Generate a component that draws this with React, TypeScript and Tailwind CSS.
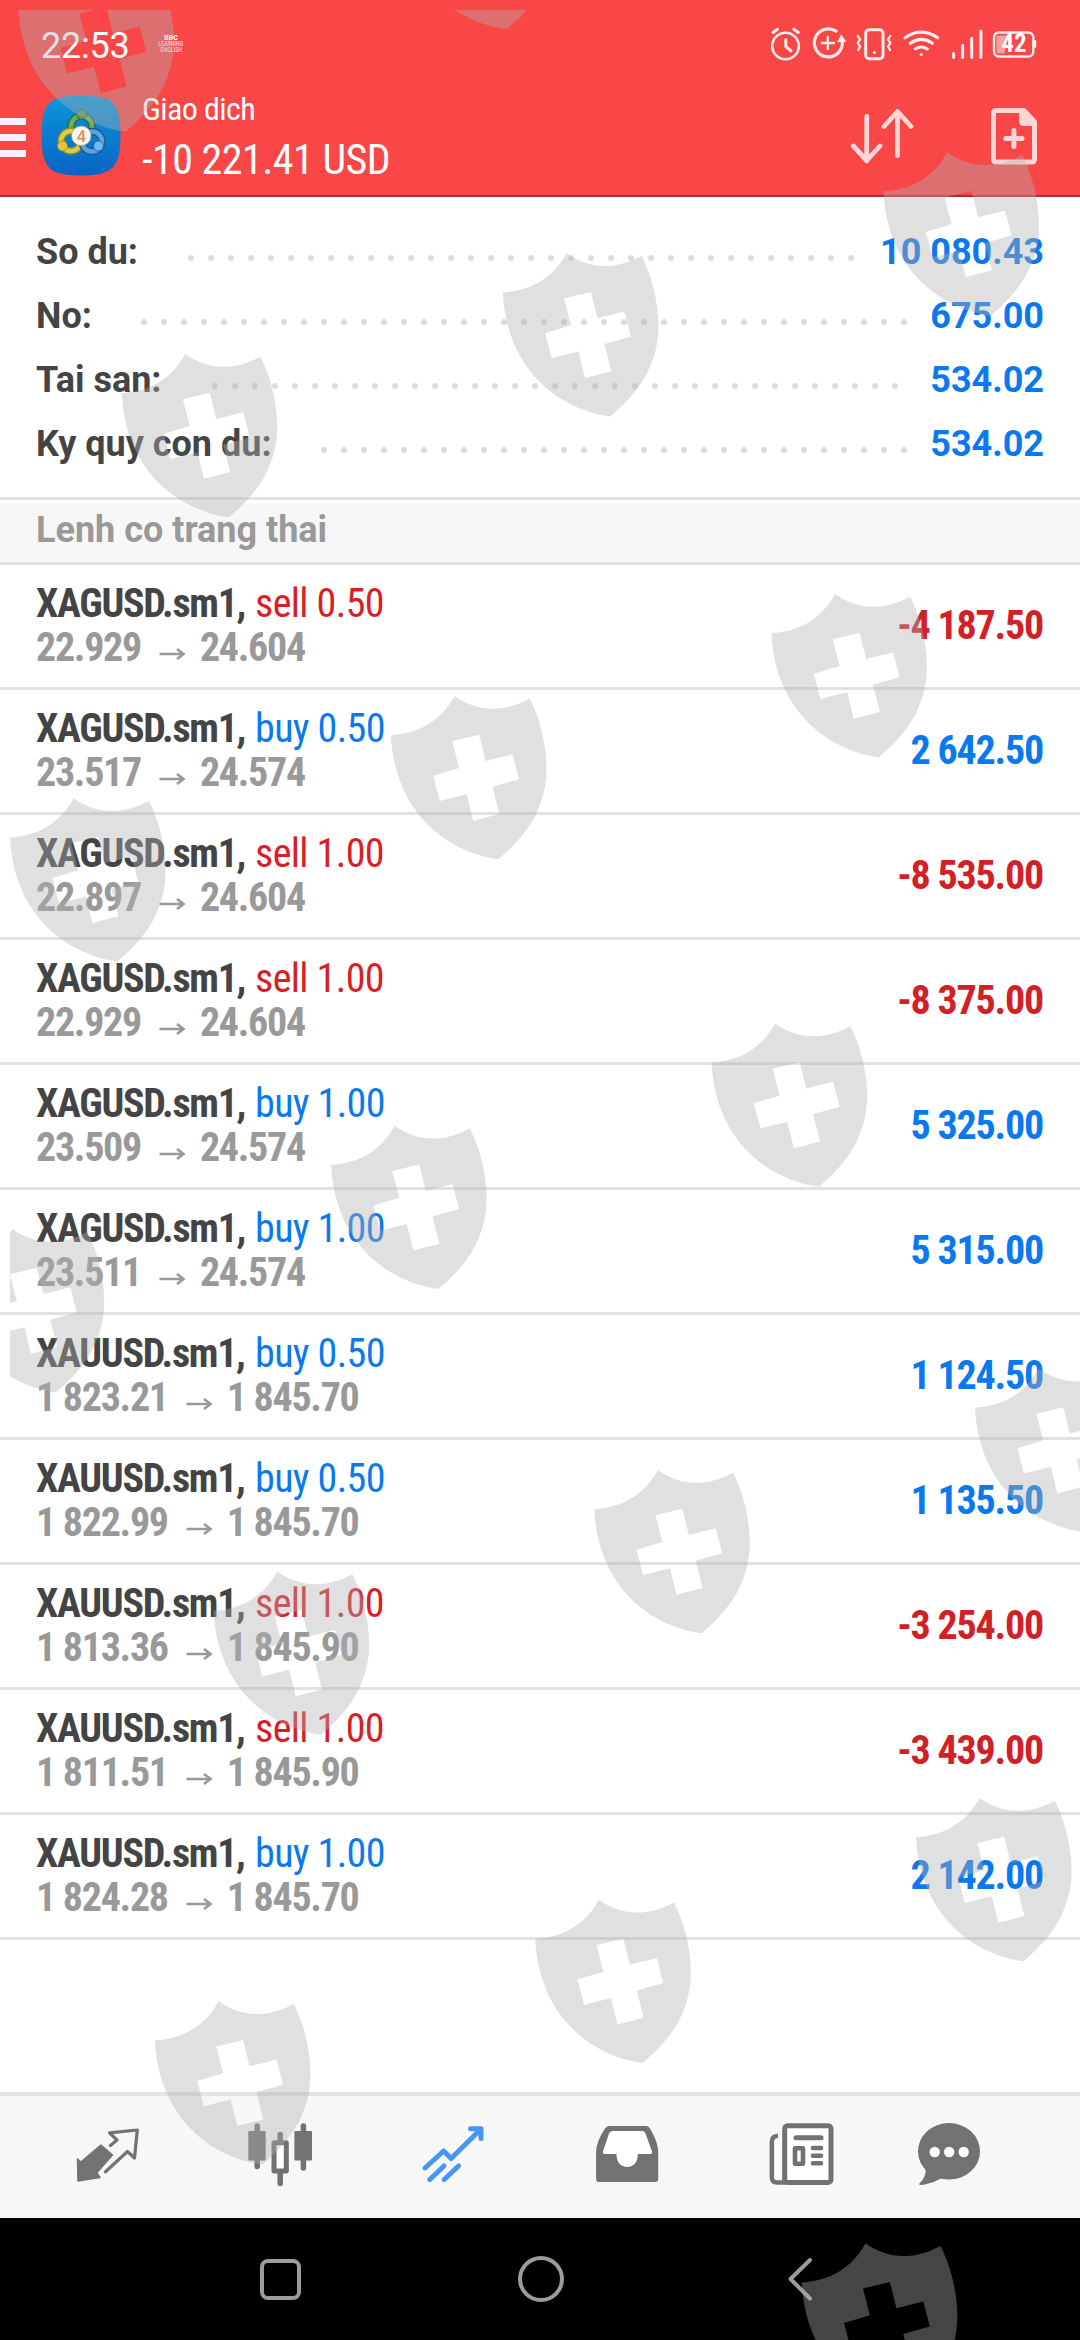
import type { ReactNode } from "react";
import clsx from "clsx";

interface Position {
  symbol: string;
  side: "buy" | "sell";
  volume: string;
  open: string;
  current: string;
  profit: string;
}

const summary = [
  { label: "So du:", value: "10 080.43", width: "w-[145px]", dots: 34 },
  { label: "No:", value: "675.00", width: "w-[98px]", dots: 39 },
  { label: "Tai san:", value: "534.02", width: "w-[169px]", dots: 35 },
  { label: "Ky quy con du:", value: "534.02", width: "w-[278px]", dots: 30 },
];

const positions: Position[] = [
  { symbol: "XAGUSD.sm1", side: "sell", volume: "0.50", open: "22.929", current: "24.604", profit: "-4 187.50" },
  { symbol: "XAGUSD.sm1", side: "buy", volume: "0.50", open: "23.517", current: "24.574", profit: "2 642.50" },
  { symbol: "XAGUSD.sm1", side: "sell", volume: "1.00", open: "22.897", current: "24.604", profit: "-8 535.00" },
  { symbol: "XAGUSD.sm1", side: "sell", volume: "1.00", open: "22.929", current: "24.604", profit: "-8 375.00" },
  { symbol: "XAGUSD.sm1", side: "buy", volume: "1.00", open: "23.509", current: "24.574", profit: "5 325.00" },
  { symbol: "XAGUSD.sm1", side: "buy", volume: "1.00", open: "23.511", current: "24.574", profit: "5 315.00" },
  { symbol: "XAUUSD.sm1", side: "buy", volume: "0.50", open: "1 823.21", current: "1 845.70", profit: "1 124.50" },
  { symbol: "XAUUSD.sm1", side: "buy", volume: "0.50", open: "1 822.99", current: "1 845.70", profit: "1 135.50" },
  { symbol: "XAUUSD.sm1", side: "sell", volume: "1.00", open: "1 813.36", current: "1 845.90", profit: "-3 254.00" },
  { symbol: "XAUUSD.sm1", side: "sell", volume: "1.00", open: "1 811.51", current: "1 845.90", profit: "-3 439.00" },
  { symbol: "XAUUSD.sm1", side: "buy", volume: "1.00", open: "1 824.28", current: "1 845.70", profit: "2 142.00" },
];

const shields = [
  [18.2, -31.6], [398.9, -134],
  [883.4, 152.3], [502.8, 253.3], [121.6, 354],
  [771.4, 594], [390.9, 696], [10, 798.3],
  [711.5, 1023.5], [331, 1125.7], [-51.4, 1229],
  [975, 1368.5], [594.2, 1470], [213.5, 1571.5],
  [916, 1798], [535.2, 1899.7], [154.9, 2001.3],
  [801.7, 2243.3],
];

const StatusIcons = () => (
  <svg className="h-9 w-[272px]" viewBox="768 26 272 36" fill="none" stroke="#ffecec" strokeWidth="3" strokeLinecap="round">
    {/* alarm */}
    <circle cx="785.5" cy="46" r="13.3" strokeWidth="2.6" />
    <path d="M773 32.5L777.5 29.3M798.3 32.5L793.8 29.3M785.8 39.5V46.5L791 50.8" />
    {/* data saver */}
    <path d="M836 31.2A14 14 0 1 0 842.3 42" strokeWidth="3.2" />
    <path d="M827.8 37V49M821.8 43H834" strokeWidth="2.4" />
    <path d="M841.2 36L845 41L838.5 41.500Z" fill="#ffecec" strokeWidth="1.500" />
    {/* vibrate */}
    <rect x="865.7" y="29.7" width="17.3" height="29" rx="3.5" />
    <path d="M857.8 36L860 39.5L857.8 43L860 46.5L858.2 50M890.3 36L888.1 39.5L890.3 43L888.1 46.5L890 50" strokeWidth="2.3" />
    <circle cx="874.3" cy="52.5" r="1.6" fill="#ffecec" stroke="none" />
    {/* wifi */}
    <path d="M905 37.8Q921.3 26.5 937.6 37.8M910.3 43.3Q921.3 35.5 932.3 43.3M915.3 48.9Q921.3 45 927.3 48.9" />
    <circle cx="921.3" cy="54.6" r="1.6" fill="#ffecec" stroke="none" />
    {/* signal */}
    <path d="M953.6 53.5V57.5M962.6 45.5V57.5M971.7 38.3V57.5M980.9 31V57.5" />
    {/* battery */}
    <path d="M996.5 35.5H1008L1004.5 53.5H996.5Z" fill="#fda0a0" stroke="none" />
    <rect x="994" y="32.5" width="39.3" height="24" rx="5" strokeWidth="2.4" />
    <path d="M1034.5 41.5V46.5" strokeWidth="3.4" />
    <text
      x="1001.5"
      y="52.3"
      fill="#ffffff"
      stroke="none"
      textLength="25"
      lengthAdjust="spacingAndGlyphs"
      className="[font-family:'Roboto_Condensed',Roboto,sans-serif] text-[25px] font-bold"
    >
      42
    </text>
  </svg>
);

const AppLogo = () => (
  <svg className="h-[81px] w-20" viewBox="0 0 80 81">
    <defs>
      <linearGradient id="tile" x1="0" y1="0" x2="0" y2="1">
        <stop offset="0" stopColor="#0b96dc" />
        <stop offset="1" stopColor="#0a63c4" />
      </linearGradient>
    </defs>
    <path d="M0.5 40C0.5 8 8 0.5 40 0.5S79.5 8 79.5 40S72 80.5 40 80.5S0.5 73 0.5 40Z" fill="url(#tile)" />
    <g fill="none">
      <circle cx="40.500" cy="31.500" r="10.500" stroke="#2c6f3a" strokeWidth="7.500" />
      <circle cx="40.500" cy="31.500" r="10.500" stroke="#6aae62" strokeWidth="4.500" />
      <circle cx="30" cy="46" r="10" stroke="#8f8a2a" strokeWidth="7.500" />
      <circle cx="30" cy="46" r="10" stroke="#d8cf45" strokeWidth="4.500" />
      <circle cx="51" cy="46.500" r="10" stroke="#1d5c94" strokeWidth="7.500" />
      <circle cx="51" cy="46.500" r="10" stroke="#58a5dc" strokeWidth="4.500" />
    </g>
    <circle cx="40.500" cy="19.500" r="5" fill="#4c9a5a" stroke="#2c6f3a" strokeWidth="0.8" />
    <circle cx="21.500" cy="51" r="5" fill="#e2c637" stroke="#8f8a2a" strokeWidth="0.8" />
    <circle cx="57.500" cy="51" r="5" fill="#6cbcf4" stroke="#1d5c94" strokeWidth="0.8" />
    <circle cx="40.300" cy="40.800" r="9.800" fill="#f8f7ef" stroke="#9da083" strokeWidth="0.8" />
    <text x="40.300" y="46.800" textAnchor="middle" fill="#e8914a" className="[font-family:Roboto,sans-serif] text-[17px] font-medium">
      4
    </text>
  </svg>
);

const Header = () => (
  <header className="h-[197px] border-b-2 border-[#a8302f] bg-[#f94646] text-white">
    <div className="flex h-[88px] items-center pr-10 pl-[41px]">
      <span className="w-[116px] pt-1 text-[36px] leading-[84px] tracking-[-0.2px]">22:53</span>
      <div className="flex w-7 flex-col items-center text-[7px] leading-[6px] font-medium text-[#ffdada]">
        <span className="font-black text-white">BBC</span>
        <span className="scale-x-75">LEARNING</span>
        <span className="scale-x-75">ENGLISH</span>
      </div>
      <div className="ml-auto">
        <StatusIcons />
      </div>
    </div>
    <div className="flex h-[107px] [font-family:'Roboto_Condensed',Roboto,sans-serif]">
      <div className="mt-[30px] mr-[15px] flex w-[26px] flex-col gap-[9px]">
        <span className="h-[7px] bg-[#fdeeff]" />
        <span className="h-[7px] bg-[#fdeeff]" />
        <span className="h-[7px] bg-[#fdeeff]" />
      </div>
      <div className="mt-[7px]">
        <AppLogo />
      </div>
      <div className="ml-[21px] flex flex-col whitespace-nowrap">
        <span className="mt-px text-[32px] leading-10 tracking-[-0.6px]">Giao dich</span>
        <span className="mt-1 text-[42px] leading-[54px] tracking-[-0.5px]">-10 221.41 USD</span>
      </div>
      <svg className="mt-5 ml-auto h-[60px] w-16" viewBox="850 108 64 60" fill="none" stroke="#ffd6d6" strokeWidth="4.800" strokeLinecap="round" strokeLinejoin="round">
        <path d="M866.700 116.500V161M853.300 146L866.700 160.500L880 146" />
        <path d="M897.500 155.500V112M884 126.500L897.500 111.500L911 126.500" />
      </svg>
      <svg className="mt-5 mr-10 ml-[74px] h-[60px] w-[52px]" viewBox="988 108 52 60" fill="none" stroke="#ffd6d6" strokeWidth="5" strokeLinecap="round" strokeLinejoin="round">
        <path d="M993.500 113.500V159Q993.500 162 996.500 162H1031.500Q1034.500 162 1034.500 159V122L1024 110.500H996.500Q993.500 110.500 993.500 113.500Z" />
        <path d="M1021.500 112V121Q1021.500 123.500 1024 123.500H1033Z" fill="#ffd6d6" />
        <path d="M1013.900 130.500V146.500M1005.800 138.500H1022" />
      </svg>
    </div>
  </header>
);

const Summary = () => (
  <section className="border-b-3 border-[#e2e2e2] pt-[23px] pr-9 pb-[21px] pl-9 text-[36px] font-bold">
    {summary.map((row) => (
      <div key={row.label} className="flex h-16 items-center leading-[64px]">
        <span className={clsx("shrink-0 whitespace-nowrap text-[#444]", row.width)}>{row.label}</span>
        <span className="mt-3 flex">
          {Array.from({ length: row.dots }, (_, i) => (
            <span key={i} className="mx-[7px] size-1.5 rounded-full bg-[#dcdcdc]" />
          ))}
        </span>
        <span className="ml-auto text-[#0b79ee]">{row.value}</span>
      </div>
    ))}
  </section>
);

const PositionRow = ({ position }: { position: Position }) => (
  <li className="flex h-[125px] items-center justify-between border-b-3 border-[#e2e2e2] pr-[37px] pl-9 text-[40px] leading-[44px]">
    <div className="flex flex-col whitespace-nowrap">
      <div className="flex">
        <span className="w-[219px] font-bold tracking-[-1.3px] text-[#444]">{position.symbol},</span>
        <span className={clsx("tracking-[-0.6px]", position.side === "buy" ? "text-[#0b79ee]" : "text-[#d81f26]")}>
          {position.side} {position.volume}
        </span>
      </div>
      <div className="flex font-bold tracking-[-1.3px] text-[#999]">
        <span>{position.open}</span>
        <svg className="mt-[22px] mr-[14px] ml-[17px] h-3 w-7" viewBox="0 0 28 12" fill="none" stroke="#999" strokeWidth="2.600">
          <path d="M1.500 6H25M19 1L25.500 6L19 11" />
        </svg>
        <span>{position.current}</span>
      </div>
    </div>
    <span className={clsx("font-bold tracking-[-1.2px]", position.profit.startsWith("-") ? "text-[#d22027]" : "text-[#0b79ee]")}>
      {position.profit}
    </span>
  </li>
);

const TabIcon = ({ children }: { children: ReactNode }) => (
  <svg className="h-[70px] w-[72px]" viewBox="0 0 72 70" fill="none" stroke="#727272" strokeLinejoin="round" strokeLinecap="round">
    {children}
  </svg>
);

const TabBar = () => (
  <nav className="flex h-[126px] border-t-4 border-[#e4e4e4] bg-[#f7f7f7] pt-6 pl-[70px]">
    <TabIcon>
      <path d="M7.500 39L10.900 42L30.900 25L42.500 35L26.800 52.700L30 57.500L8 61Z" fill="#727272" strokeWidth="1.500" />
      <path d="M35.500 51.800L57.500 31.500L64.500 38L67.300 10L39.500 12.800L47 20L40.500 25.500" strokeWidth="3.200" />
    </TabIcon>
    <span className="w-[102px]" />
    <TabIcon>
      <path d="M13.200 6V46.500M59.400 6V48M36.200 14.500V63.500" strokeWidth="5.500" />
      <rect x="5.300" y="12" width="15.400" height="27.500" fill="#727272" strokeWidth="2" />
      <rect x="51.400" y="12" width="15.600" height="27.500" fill="#727272" strokeWidth="2" />
      <rect x="30" y="22.800" width="12.300" height="28.200" fill="#fff" strokeWidth="5" />
    </TabIcon>
    <span className="w-[102px]" />
    <TabIcon>
      <g stroke="#4697f4" strokeWidth="5">
        <path d="M7 48L25.600 31L33.100 38.500L62.500 9.500M11.800 59.500L26 46M26.200 59.500L40.500 46" />
        <path d="M52.500 8.800H63V18.500" />
      </g>
    </TabIcon>
    <span className="w-[100px]" />
    <TabIcon>
      <path
        d="M19 6H56.500Q58.500 6 60 8.500Q68.200 22 68.200 32V59Q68.200 62 65.200 62H9Q6.100 62 6.100 59V32Q6.100 22 15 8.500Q16.500 6 19 6Z"
        fill="#727272"
        stroke="none"
      />
      <path
        d="M22.500 11H52.500Q54.500 11 55.500 13.500L62 31.500Q62.500 34 60 34H47.800C47.800 42 44 47 37.200 47S26.500 42 26.500 34H15Q12.300 34 13 31.500L19 13.500Q20 11 22.500 11Z"
        fill="#fff"
        stroke="none"
      />
    </TabIcon>
    <span className="w-[103px]" />
    <TabIcon>
      <path d="M13 15.800Q6.900 16 6.900 22V57Q6.900 62.500 12 62.500H20V22" strokeWidth="4.600" strokeLinecap="butt" />
      <rect x="9.500" y="20" width="7.500" height="39.500" fill="#fcfcfc" stroke="none" />
      <rect x="19.700" y="5.700" width="46.300" height="56.700" rx="3" fill="#fff" strokeWidth="5" />
      <path d="M31 17.700H56" strokeWidth="5" />
      <rect x="30" y="28.200" width="8" height="15.600" strokeWidth="4.600" />
      <path d="M48 28H56M48 35.700H56M48 43.300H56" strokeWidth="4.600" />
    </TabIcon>
    <span className="w-[76px]" />
    <TabIcon>
      <ellipse cx="36" cy="31.300" rx="31" ry="28.300" fill="#727272" stroke="none" />
      <path d="M12.500 47Q14 57 6 64Q6 65.500 12 64.500Q21 62.500 29 58Z" fill="#727272" stroke="none" />
      <g fill="#fff" stroke="none">
        <circle cx="21.700" cy="32" r="5.200" />
        <circle cx="36.200" cy="32" r="5.200" />
        <circle cx="50.700" cy="32" r="5.200" />
      </g>
    </TabIcon>
  </nav>
);

const SystemNav = () => (
  <div className="flex h-[122px] items-center bg-black pl-[260px]">
    <span className="h-[41px] w-[41px] rounded-lg border-4 border-[#9c9c9c]" />
    <span className="ml-[216.500px] size-[46px] rounded-full border-4 border-[#9c9c9c]" />
    <svg className="ml-[222px] h-11 w-7" viewBox="0 0 28 44" fill="none" stroke="#9c9c9c" strokeWidth="4" strokeLinecap="round" strokeLinejoin="round">
      <path d="M24 3L4.500 22L24 41.500" />
    </svg>
  </div>
);

const ShieldOverlay = () => (
  <div className="pointer-events-none absolute top-[10px] right-0 bottom-0 left-[10px] overflow-hidden">
    <svg className="h-full w-full" viewBox="10 10 1070 2330" fill="#b0b0b0" fillOpacity="0.392">
      {shields.map(([x, y]) => (
        <path
          key={`${x}-${y}`}
          transform={`translate(${x} ${y})`}
          fillRule="evenodd"
          d="M0 39.300C29 37 50 25 63.700 0C86 16 112 17 138.800 2.700C153 30 162 75 150 106C143 128 127 147 107.400 163.300C60 157 4 120 0 39.300ZM61.300 45.300L68.200 72L42.400 79.700L48.900 105L75.800 98.300L82.300 124.700L108.500 118L101.600 90.700L128.100 83.300L121.600 58.300L94.700 65L88.200 38.700Z"
        />
      ))}
    </svg>
  </div>
);

export default function App() {
  return (
    <div className="relative flex h-[2340px] w-[1080px] flex-col overflow-hidden bg-white [font-family:Roboto,sans-serif]">
      <Header />
      <Summary />
      <h2 className="border-t-3 border-b-3 border-t-white border-b-[#e2e2e2] bg-[#f7f7f7] pb-[5px] pl-9 text-[36px] leading-[54px] font-bold text-[#999]">
        Lenh co trang thai
      </h2>
      <ul className="flex-1 [font-family:'Roboto_Condensed',Roboto,sans-serif]">
        {positions.map((position, i) => (
          <PositionRow key={i} position={position} />
        ))}
      </ul>
      <TabBar />
      <SystemNav />
      <ShieldOverlay />
    </div>
  );
}
